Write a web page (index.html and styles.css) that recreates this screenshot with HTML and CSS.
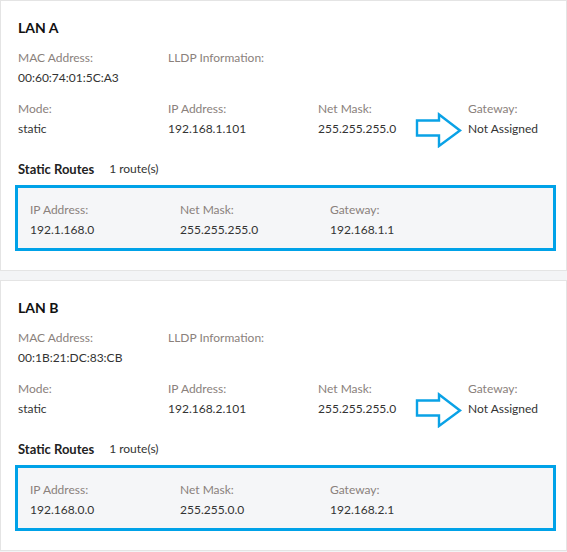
FILE: index.html
```html
<!DOCTYPE html>
<html>
<head>
<meta charset="utf-8">
<link rel="stylesheet" href="styles.css">
</head>
<body>
<div class="card">
  <h2 class="title">LAN A</h2>
  <div class="fields">
    <div class="field"><div class="label">MAC Address:</div><div class="value">00:60:74:01:5C:A3</div></div>
    <div class="field"><div class="label">LLDP Information:</div><div class="value"></div></div>
    <div class="field"></div>
    <div class="field"></div>
    <div class="field"><div class="label">Mode:</div><div class="value">static</div></div>
    <div class="field"><div class="label">IP Address:</div><div class="value">192.168.1.101</div></div>
    <div class="field"><div class="label">Net Mask:</div><div class="value">255.255.255.0</div></div>
    <div class="field"><div class="label">Gateway:</div><div class="value">Not Assigned</div></div>
  </div>
  <div class="routes-head"><span class="routes-title">Static Routes</span><span class="routes-count">1 route(s)</span></div>
  <div class="route">
    <div class="field"><div class="label">IP Address:</div><div class="value">192.1.168.0</div></div>
    <div class="field"><div class="label">Net Mask:</div><div class="value">255.255.255.0</div></div>
    <div class="field"><div class="label">Gateway:</div><div class="value">192.168.1.1</div></div>
  </div>
  <svg class="arrow" width="50" height="36" viewBox="0 0 50 36"><path d="M3 8.5 H25 V2.5 L46 18.5 L25 34 V23.5 H3 Z" fill="none" stroke="#0aa2e6" stroke-width="2.4" stroke-linejoin="miter"/></svg>
</div>
<div class="card">
  <h2 class="title">LAN B</h2>
  <div class="fields">
    <div class="field"><div class="label">MAC Address:</div><div class="value">00:1B:21:DC:83:CB</div></div>
    <div class="field"><div class="label">LLDP Information:</div><div class="value"></div></div>
    <div class="field"></div>
    <div class="field"></div>
    <div class="field"><div class="label">Mode:</div><div class="value">static</div></div>
    <div class="field"><div class="label">IP Address:</div><div class="value">192.168.2.101</div></div>
    <div class="field"><div class="label">Net Mask:</div><div class="value">255.255.255.0</div></div>
    <div class="field"><div class="label">Gateway:</div><div class="value">Not Assigned</div></div>
  </div>
  <div class="routes-head"><span class="routes-title">Static Routes</span><span class="routes-count">1 route(s)</span></div>
  <div class="route">
    <div class="field"><div class="label">IP Address:</div><div class="value">192.168.0.0</div></div>
    <div class="field"><div class="label">Net Mask:</div><div class="value">255.255.0.0</div></div>
    <div class="field"><div class="label">Gateway:</div><div class="value">192.168.2.1</div></div>
  </div>
  <svg class="arrow" width="50" height="36" viewBox="0 0 50 36"><path d="M3 8.5 H25 V2.5 L46 18.5 L25 34 V23.5 H3 Z" fill="none" stroke="#0aa2e6" stroke-width="2.4" stroke-linejoin="miter"/></svg>
</div>
</body>
</html>
```
FILE: styles.css
```css
html, body {
  margin: 0;
  padding: 0;
  background: #f3f4f6;
}
body {
  font-family: Lato, "Open Sans", sans-serif;
  font-size: 12px;
  color: #333;
  width: 567px;
}
.card {
  position: relative;
  box-sizing: border-box;
  height: 271px;
  background: #fff;
  border: 1px solid #e4e4e4;
  padding: 17px 10px 0 17px;
  margin-bottom: 9px;
}
.title {
  margin: 0;
  font-size: 14px;
  font-weight: 700;
  line-height: 20px;
  color: #111;
}
.fields {
  display: grid;
  grid-template-columns: 150px 150px 150px 1fr;
  row-gap: 11px;
  margin-top: 9.5px;
}
.label {
  color: #8a817c;
  line-height: 20px;
  height: 20px;
  white-space: nowrap;
}
.value {
  color: #333;
  line-height: 20px;
  height: 20px;
  white-space: nowrap;
}
.routes-head {
  margin-top: 20px;
  line-height: 20px;
  display: flex;
  gap: 15px;
}
.routes-title {
  font-weight: 700;
  font-size: 13px;
  color: #222;
}
.routes-count {
  color: #333;
}
.route {
  margin: 6px 0 0 -3px;
  border: 3px solid #00a2e8;
  background: #f5f6f8;
  display: grid;
  grid-template-columns: 150px 150px 1fr;
  padding: 12px 12px 8px 12px;
  height: 40px;
}
.arrow {
  position: absolute;
  left: 413px;
  top: 111px;
}
```
